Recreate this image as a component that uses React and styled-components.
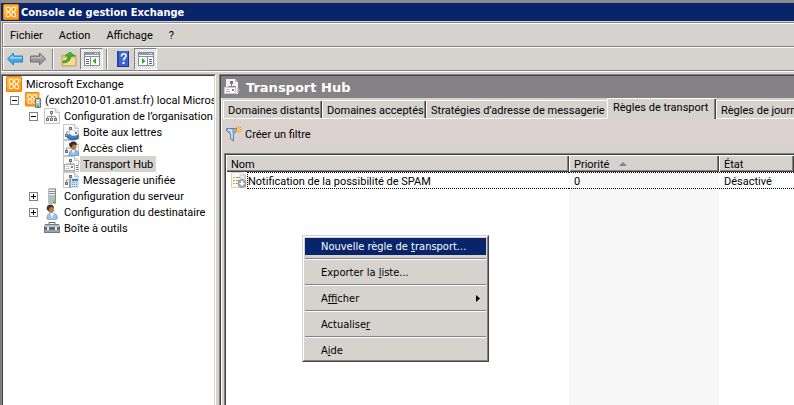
import React from 'react'
import styled, { createGlobalStyle, css } from 'styled-components'

const GlobalStyle = createGlobalStyle`
  * {
    box-sizing: border-box;
  }
  body {
    margin: 0;
    background: #848284;
    color: #000;
    font-family: Roboto, 'Liberation Sans', sans-serif;
    font-size: 11px;
  }
  button {
    padding: 0;
    border: 0;
    background: none;
    color: inherit;
    font: inherit;
    text-align: left;
    white-space: nowrap;
  }
`

/* ---------- icons ---------- */

// orange tile with the four petals of the Exchange logo
const ExchangeMark = () => (
  <>
    <rect x="0" y="0" width="16" height="16" rx="1.500" fill="#f57c00" />
    <rect x="1" y="1" width="14" height="14" rx="1" fill="#ff9a1f" />
    <path d="M1 1h14v5C10 6 5 8 1 11z" fill="#ffb545" />
    <g fill="#f9921c" stroke="#fff3cf" strokeWidth="1.200">
      <path d="M3.500 3.500h3l1 2-1 2h-2l-1-2z" />
      <path d="M12.500 3.500h-3l-1 2 1 2h2l1-2z" />
      <path d="M3.500 12.500h3l1-2-1-2h-2l-1 2z" />
      <path d="M12.500 12.500h-3l-1-2 1-2h2l1 2z" />
    </g>
  </>
)

// sheet of paper with a folded corner
const Sheet = () => (
  <>
    <path d="M.5.5h11l4 4v11H.5z" fill="#fbfbfb" stroke="#c6c6c8" />
    <path d="M11.500.5v4h4" fill="#e6e6e8" stroke="#c6c6c8" />
  </>
)

// sheet with the top of a chart, base of the third-level tree icons
const RoleSheet = () => (
  <>
    <Sheet />
    <path d="M7.500 6v2M3.500 10V8h8" fill="none" stroke="#98989c" />
    <rect x="6.500" y="3.500" width="2" height="2" fill="#bbb" stroke="#6d6d71" />
    <rect x="2.500" y="10.500" width="2" height="2" fill="#bbb" stroke="#6d6d71" />
  </>
)

const drawings = {
  exchange: <ExchangeMark />,
  server2010: (
    <>
      <g transform="scale(.9)">
        <ExchangeMark />
      </g>
      <path d="M10.500 6.500h5v9h-5z" fill="#b3bec3" stroke="#6b777d" />
      <path d="M11 8.500h3M11 10.500h3" stroke="#f2f5f6" />
      <rect x="12" y="13" width="2" height="2" fill="#43c41e" />
    </>
  ),
  org: (
    <>
      <Sheet />
      <path d="M7.500 6v4M3.500 10V8.500h8V10" fill="none" stroke="#98989c" />
      <rect x="6.500" y="3.500" width="2" height="2" fill="#ddd" stroke="#77777b" />
      <rect x="2.500" y="10.500" width="2" height="2" fill="#ddd" stroke="#77777b" />
      <rect x="6.500" y="10.500" width="2" height="2" fill="#ddd" stroke="#77777b" />
      <rect x="10.500" y="10.500" width="2" height="2" fill="#ddd" stroke="#77777b" />
    </>
  ),
  mailbox: (
    <>
      <RoleSheet />
      <path d="M6 6l9 1v5l-8-1z" fill="#fff" stroke="#b9b9c4" strokeWidth=".7" />
      <rect x="12" y="8" width="2" height="2" fill="#e0555c" />
      <path d="M4 11l3-1 2 2h3l4-2v4l-3 2H7l-3-2z" fill="#3c82c4" />
      <path d="M4 13l3 2h6l3-2" fill="none" stroke="#235f9c" />
    </>
  ),
  client: (
    <>
      <RoleSheet />
      <path d="M6 16c0-5 2-6 5-6s5 2 5 6z" fill="#8fbce8" stroke="#4a7fb8" strokeWidth=".7" />
      <path d="M9 10l1 4 2-4z" fill="#fff" />
      <ellipse cx="10.500" cy="6" rx="3" ry="4" fill="#b9784a" />
      <path d="M7 7c-2-7 7-7 7-2-3-1-5-1-5 2z" fill="#3b2a20" />
    </>
  ),
  hub: (
    <>
      <RoleSheet />
      <rect x="1.500" y="8.500" width="10" height="6" fill="#fff" stroke="#a8a8ae" />
      <path d="M3 10.500h3M3 12.500h4" stroke="#c4c4ca" />
      <rect x="8" y="10" width="2" height="2" fill="#e0555c" />
      <path d="M13 9.500h2M13 11.500h2M13 13.500h2" stroke="#5a7ca8" />
    </>
  ),
  hubTitle: (
    <>
      <path d="M2 0h9l3 3v12H2z" fill="#f1f1f3" />
      <path d="M11 0v3h3" fill="#b8b8bc" />
      <path d="M7.500 4v3M4 7.500h8" stroke="#8a8a8e" fill="none" />
      <rect x="6" y="2" width="3" height="3" fill="#77777b" />
      <rect x=".5" y="8.500" width="11" height="6" fill="#fff" stroke="#c8c8ce" />
      <path d="M2 10.500h3M2 12.500h4" stroke="#a9a9b2" />
      <rect x="8" y="10" width="2" height="2" fill="#e0555c" />
      <path d="M13 9.500h2M13 11.500h3M13 13.500h2" stroke="#9dc1e6" />
    </>
  ),
  unified: (
    <>
      <RoleSheet />
      <path d="M6 7h2v9H6z" fill="#9aa3aa" />
      <rect x="8" y="6" width="8" height="10" fill="#cfdfee" />
      <rect x="9" y="7" width="6" height="2" fill="#2f8bd8" />
      <path d="M9 10.500h6M9 12.500h6M9 14.500h6" stroke="#6d9cc8" strokeDasharray="1 1" />
    </>
  ),
  server: (
    <>
      <path d="M4 1l1-1h6l1 1v14l-1 1H5l-1-1z" fill="#b3bdc0" />
      <path d="M11 0l1 1v14l-1 1z" fill="#7f8b90" />
      <path d="M5 2.500h6M5 4.500h6M5 6.500h6" stroke="#f4f7f7" />
      <path d="M5 3.500h6M5 5.500h6" stroke="#7f8a8e" />
      <rect x="9" y="13" width="3" height="2" fill="#43d411" />
    </>
  ),
  recipient: (
    <>
      <path d="M3 15c0-4 1-6 5-6s6 3 5 6c-3 1-7 1-10 0z" fill="#9cc4ea" stroke="#5f8cc0" strokeWidth=".7" />
      <path d="M6 9l2 5 2-5z" fill="#eff6fd" />
      <ellipse cx="7" cy="5" rx="3" ry="4" fill="#b9784a" />
      <path d="M3 6C1-1 10-1 10 4 7 2 5 3 5 7z" fill="#4a3628" />
    </>
  ),
  toolbox: (
    <>
      <path d="M5 5V2.500h6V5" fill="none" stroke="#5b666d" />
      <path d="M1 4h14l1 3v6H0V7z" fill="#6f7c84" />
      <path d="M1 5h14v2H1z" fill="#b4bec4" />
      <path d="M1 10h14v2H1z" fill="#98a4ab" />
      <path d="M0 8.500h16" stroke="#4c585e" />
      <path d="M3 7h2v3H3zM11 7h2v3h-2z" fill="#eceff0" />
    </>
  ),
  back: (
    <>
      <path d="M.5 8L6.500 2v3h9v6h-9v3z" fill="#3fa9ea" stroke="#2a83bd" />
      <path d="M2 8l4-4v2h9v1.500H6z" fill="#9adafa" />
    </>
  ),
  forward: (
    <>
      <path d="M15.500 8l-6-6v3h-9v6h9v3z" fill="#969698" stroke="#717174" />
      <path d="M14 8l-4-4v2H1v1.500h9z" fill="#bcbcbe" />
    </>
  ),
  folderUp: (
    <>
      <path d="M1 4h5l1 1h7v-1h1v11H1z" fill="#e5bf63" stroke="#c99c45" strokeWidth=".8" />
      <path d="M2 7h12v7H2z" fill="#f7dd94" />
      <path d="M3 10c3 0 5-2 5-5H5l5-4 5 4h-4c0 4-3 7-8 7z" fill="#43b036" stroke="#248420" strokeWidth=".6" transform="translate(-1 0)" />
    </>
  ),
  treePane: (
    <>
      <rect x=".5" y="1.500" width="15" height="13" fill="#fff" stroke="#848e9c" />
      <rect x="1" y="2" width="14" height="2" fill="#8d99ad" />
      <path d="M11 2h1v1h-1zM13 2h1v1h-1z" fill="#fff" />
      <path d="M6.500 6v8M1 5.500h14" stroke="#848e9c" />
      <path d="M2 8.500h3M2 10.500h3M2 12.500h3" stroke="#4d6488" />
      <path d="M12 7v6L8.500 10z" fill="#2fa824" />
    </>
  ),
  help: (
    <>
      <rect x="2" y="0" width="12" height="16" fill="#3a66d2" />
      <path d="M2 0h2v16H2z" fill="#2249a8" />
      <path d="M13 0h1v16h-1zM2 15h12v1H2z" fill="#1a3788" />
      <path d="M6.500 5.500c0-3.500 4.500-3.500 4.500-1 0 2.500-2.500 2.500-2.500 5" fill="none" stroke="#fff" strokeWidth="1.600" />
      <rect x="7.500" y="11" width="2" height="2" fill="#fff" />
    </>
  ),
  actionPane: (
    <>
      <rect x=".5" y="1.500" width="15" height="13" fill="#fff" stroke="#848e9c" />
      <rect x="1" y="2" width="14" height="2" fill="#8d99ad" />
      <path d="M11 2h1v1h-1zM13 2h1v1h-1z" fill="#fff" />
      <path d="M9.500 6v8M1 5.500h14" stroke="#848e9c" />
      <path d="M11 8.500h3M11 10.500h3M11 12.500h3" stroke="#4d6488" />
      <path d="M4 7v6l3.500-3z" fill="#2fa824" />
    </>
  ),
  filter: (
    <>
      <path d="M.5 2.500h11v2L7.500 8v7l-3-2V8l-4-3.500z" fill="#8fabcb" stroke="#58769c" strokeWidth=".8" />
      <path d="M2 4h3l1 4v5" fill="none" stroke="#e3edf7" strokeWidth="1.300" />
      <path d="M12.500 0v7M9 3.500h7M10 1l5 5M15 1l-5 5" stroke="#f2a01e" />
      <circle cx="12.500" cy="3.500" r="1.500" fill="#ffd452" />
    </>
  ),
  rule: (
    <>
      <path d="M.5.5h10l4 3v12H.5z" fill="#fbf8ee" stroke="#d2cec2" />
      <path d="M5 5.500h5M5 8.500h3M5 11.500h2" stroke="#9a9a9a" />
      <path d="M2 5h2v1H2zM2 8h2v1H2zM2 11h2v1H2z" fill="#d8a23a" />
      <rect x="9" y="3" width="5" height="4" fill="#ececf0" stroke="#b4b4bc" strokeWidth=".6" />
      <circle cx="11" cy="11.500" r="4" fill="#a9a9ac" stroke="#8a8a8e" strokeWidth=".7" />
      <path d="M10 9h2v2h2l-3 3-3-3h2z" fill="#fff" />
    </>
  ),
}

const IconSvg = styled.svg`
  flex: none;
  width: 16px;
  height: 16px;
  display: block;
`

const Icon = ({ name }) => (
  <IconSvg viewBox="0 0 16 16" aria-hidden="true">
    {drawings[name]}
  </IconSvg>
)

/* ---------- window ---------- */

const Window = styled.div` // whole console window
  display: flex;
  flex-direction: column;
  height: 100vh;
  border-top: 3px solid #8c8a8c;
  border-left: 1px solid #7b797b;
  overflow: hidden;
`

const TitleBar = styled.header`
  display: flex;
  align-items: center;
  gap: 2px;
  height: 19px;
  padding-left: 2px;
  background: #08246b;
  border-bottom: 1px solid #d6d3ce;
  color: #fff;

  h1 {
    margin: 0;
    font: bold 11px 'DejaVu Sans Condensed', 'DejaVu Sans', sans-serif;
    white-space: nowrap;
  }
`

const Bar = styled.div` // menu bar and tool bar share the raised edge
  display: flex;
  align-items: center;
  flex: none;
  height: 24px;
  margin-left: 1px;
  border-left: 1px solid #848284;
  border-top: 1px solid ${(p) => (p.$first ? '#848284' : '#fff')};
  border-bottom: 1px solid #848284;
  background: #d6d3ce;
  box-shadow: inset 1px 0 #fff;
`

const MenuBar = styled(Bar).attrs({ as: 'nav' })`
  height: 25px;
  gap: 16px;
  padding: 2px 0 0 7px;
  box-shadow: inset 1px 1px #fff;
`

const Frame = styled.div`
  flex: none;
  background: #d6d3ce;
`

const ToolButton = styled.button`
  display: flex;
  align-items: center;
  justify-content: center;
  width: 23px;
  height: 22px;

  ${(p) =>
    p.$pressed &&
    css`
      border: 1px solid;
      border-color: #848284 #fff #fff #848284;
      background: repeating-conic-gradient(#fff 0 25%, #d6d3ce 0 50%) 0 0 / 2px 2px;
    `}
`

const Separator = styled.span`
  width: 2px;
  height: 20px;
  margin: 0 3px;
  border-left: 1px solid #848284;
  border-right: 1px solid #fff;
`

const Main = styled.main`
  display: flex;
  flex: 1;
  min-height: 0;
  border-top: 1px solid #fff;
  background: #d6d3ce;
`

/* ---------- tree ---------- */

const TreePane = styled.aside`
  flex: none;
  width: 215px;
  margin-top: 2px;
  border: solid #848284;
  border-width: 1px 1px 0 1px;
  border-right-color: #fff;
  overflow: hidden;
`

const TreeBody = styled.div`
  height: 100%;
  border: solid #424142;
  border-width: 1px 1px 0 1px;
  border-right-color: #d6d3ce;
  background: #fff;
  overflow: hidden;
`

const Tree = styled.ul`
  margin: 0;
  padding: 0;
  list-style: none;
`

const TreeRow = styled.li`
  display: flex;
  align-items: center;
  height: 16px;
  padding-left: ${(p) => p.$level * 19 - 16}px;
`

const LeafPad = styled.span`
  flex: none;
  width: 19px;
`

const Expander = styled.button`
  flex: none;
  width: 9px;
  height: 9px;
  margin: 0 6px 0 4px;
  border: 1px solid #848284;
  background:
    linear-gradient(#000, #000) center / 5px 1px no-repeat,
    linear-gradient(#000, #000) center / 1px ${(p) => (p.$open ? 0 : 5)}px no-repeat,
    #fff;
`

const TreeLabel = styled.button`
  height: 16px;
  margin-left: 1px;
  padding: 1px 3px 0;
  line-height: 15px;
  background: ${(p) => (p.$selected ? '#d6d3ce' : 'none')};
`

/* ---------- right pane ---------- */

const Splitter = styled.div`
  flex: none;
  width: 3px;
`

const WorkPane = styled.section`
  display: flex;
  flex: 1;
  flex-direction: column;
  min-width: 0;
  margin-top: 2px;
  border: solid #848284;
  border-width: 1px 0 0 1px;
`

const PaneTitle = styled.div`
  display: flex;
  align-items: center;
  flex: none;
  gap: 6px;
  height: 23px;
  padding-left: 3px;
  border-top: 1px solid #424142;
  border-left: 1px solid #424142;
  background: #848284;
  color: #fff;

  h2 {
    margin: 0;
    font: bold 13px 'DejaVu Sans', sans-serif;
  }
`

const PaneBody = styled.div`
  display: flex;
  flex: 1;
  flex-direction: column;
  min-height: 0;
  border-left: 1px solid #424142;
  box-shadow: inset 1px 0 #fff;
`

const Tabs = styled.div`
  display: flex;
  align-items: flex-end;
  flex: none;
  height: 21px;
  padding-left: 2px;
  overflow: hidden;
`

const Tab = styled.button`
  flex: none;
  width: ${(p) => p.$width}px;
  height: 19px;
  padding: 1px 0 0 4px;
  border: solid #fff;
  border-width: 1px 0 1px 1px;
  box-shadow: inset -1px 0 #424142, inset -2px 0 #848284;

  ${(p) =>
    p.$flat &&
    css`
      box-shadow: none;
    `}

  ${(p) =>
    p.$active &&
    css`
      height: 21px;
      padding: 0 0 3px 5px;
      border-bottom: 0;
      border-radius: 2px 0 0 0;
    `}
`

const FilterBar = styled.div`
  display: flex;
  align-items: center;
  flex: none;
  height: 28px;
  margin: 1px 0 5px 1px;
  padding-left: 4px;
  background: #dbd1ce;

  button {
    display: flex;
    align-items: center;
    gap: 3px;
  }
`

const ListView = styled.div`
  flex: 1;
  min-height: 0;
  display: grid;
  margin-left: 3px;
  border: solid #848284;
  border-width: 1px 0 0 1px;
  overflow: hidden;
`

const Table = styled.table`
  width: 100%;
  height: 100%;
  border-collapse: separate;
  border-spacing: 0;
  border: solid #424142;
  border-width: 1px 0 0 1px;
  background: #fff;
  table-layout: fixed;

  tr {
    height: 17px;
  }
  th,
  td {
    padding: 0 0 0 5px;
    text-align: left;
    font-weight: normal;
    white-space: nowrap;
  }
  th {
    height: 17px;
    padding-left: 4px;
    background: #d6d3ce;
    border: solid #fff;
    border-width: 1px 0 0 1px;
    box-shadow: inset -1px -1px #424142, inset -2px -2px #848284;
  }
  td:nth-child(2) {
    background-color: #f7f7f7;
  }
  tr:last-child {
    height: auto;
  }
`

const SortMark = styled.span`
  display: inline-block;
  margin-left: 10px;
  border: solid transparent;
  border-width: 0 4px 4px;
  border-bottom-color: #848284;
  vertical-align: 2px;
`

// one-pixel dots along the top and bottom of the focused line
const dots = css`
  background-image:
    repeating-linear-gradient(90deg, #000 0 1px, transparent 1px 2px),
    repeating-linear-gradient(90deg, #000 0 1px, transparent 1px 2px);
  background-size: 100% 1px;
  background-position: 0 0, 0 100%;
  background-repeat: no-repeat;
`

const FocusCell = styled.td`
  height: 17px;
  line-height: 15px;
  ${dots}

  && {
    padding-top: 2px;
  }
`

const NameCell = styled.td`
  height: 17px;

  div {
    display: flex;
  }
  button {
    flex: 1;
    height: 17px;
    padding-top: 2px;
    line-height: 15px;
    border-left: 1px dotted #000;
    ${dots}
  }
`

/* ---------- context menu ---------- */

const ContextMenu = styled.div` // floats over the list
  position: absolute;
  left: 302px;
  top: 235px;
  width: 187px;
  border: 1px solid;
  border-color: #d6d3ce #424142 #424142 #d6d3ce;
  background: #d6d3ce;
  font-family: 'DejaVu Sans Condensed', 'DejaVu Sans', sans-serif;
`

const MenuInner = styled.div`
  display: flex;
  flex-direction: column;
  padding: 1px;
  border: 1px solid;
  border-color: #fff #848284 #848284 #fff;

  hr {
    width: 100%;
    height: 2px;
    margin: 3px 0 4px;
    border: 0;
    border-top: 1px solid #848284;
    border-bottom: 1px solid #fff;
  }
`

const MenuItem = styled.button`
  display: flex;
  align-items: center;
  justify-content: space-between;
  height: 17px;
  padding: 0 5px 0 16px;
  background: ${(p) => (p.$active ? '#08246b' : 'none')};
  color: ${(p) => (p.$active ? '#fff' : '#000')};

  svg {
    width: 5px;
    height: 7px;
  }
`

const treeItems = [
  { level: 0, icon: 'exchange', label: 'Microsoft Exchange' },
  { level: 1, icon: 'server2010', label: '(exch2010-01.amst.fr) local Microsoft', open: true },
  { level: 2, icon: 'org', label: 'Configuration de l’organisation', open: true },
  { level: 3, icon: 'mailbox', label: 'Boîte aux lettres' },
  { level: 3, icon: 'client', label: 'Accès client' },
  { level: 3, icon: 'hub', label: 'Transport Hub', selected: true },
  { level: 3, icon: 'unified', label: 'Messagerie unifiée' },
  { level: 2, icon: 'server', label: 'Configuration du serveur', open: false },
  { level: 2, icon: 'recipient', label: 'Configuration du destinataire', open: false },
  { level: 2, icon: 'toolbox', label: 'Boîte à outils' },
]

const tabs = [
  { label: 'Domaines distants', width: 99 },
  { label: 'Domaines acceptés', width: 104 },
  { label: 'Stratégies d’adresse de messagerie', width: 181, flat: true },
  { label: 'Règles de transport', width: 109, active: true },
  { label: 'Règles de journal', width: 100 },
]

export default function App() {
  return (
    <Window>
      <GlobalStyle />
      <TitleBar>
        <Icon name="exchange" />
        <h1>Console de gestion Exchange</h1>
      </TitleBar>

      <Frame>
        <MenuBar $first>
          <button>Fichier</button>
          <button>Action</button>
          <button>Affichage</button>
          <button>?</button>
        </MenuBar>
        <Bar>
          <ToolButton aria-label="Précédent"><Icon name="back" /></ToolButton>
          <ToolButton aria-label="Suivant"><Icon name="forward" /></ToolButton>
          <Separator />
          <ToolButton aria-label="Dossier parent"><Icon name="folderUp" /></ToolButton>
          <ToolButton aria-label="Arborescence" $pressed><Icon name="treePane" /></ToolButton>
          <Separator />
          <ToolButton aria-label="Aide"><Icon name="help" /></ToolButton>
          <ToolButton aria-label="Volet Actions" $pressed><Icon name="actionPane" /></ToolButton>
        </Bar>
      </Frame>

      <Main>
        <TreePane>
          <TreeBody>
            <Tree>
              {treeItems.map((item) => (
                <TreeRow key={item.label} $level={item.level || 1}>
                  {item.open !== undefined && <Expander $open={item.open} aria-label={item.label} />}
                  {item.open === undefined && item.level > 0 && <LeafPad />}
                  <Icon name={item.icon} />
                  <TreeLabel $selected={item.selected}>{item.label}</TreeLabel>
                </TreeRow>
              ))}
            </Tree>
          </TreeBody>
        </TreePane>
        <Splitter />

        <WorkPane>
          <PaneTitle>
            <Icon name="hubTitle" />
            <h2>Transport Hub</h2>
          </PaneTitle>
          <PaneBody>
            <Tabs role="tablist">
              {tabs.map((tab) => (
                <Tab key={tab.label} role="tab" $width={tab.width} $active={tab.active} $flat={tab.flat}>
                  {tab.label}
                </Tab>
              ))}
            </Tabs>
            <FilterBar>
              <button>
                <Icon name="filter" />
                Créer un filtre
              </button>
            </FilterBar>
            <ListView>
              <Table>
                <colgroup>
                  <col />
                  <col width="150" />
                  <col width="75" />
                </colgroup>
                <thead>
                  <tr>
                    <th>Nom</th>
                    <th>
                      Priorité
                      <SortMark />
                    </th>
                    <th>État</th>
                  </tr>
                </thead>
                <tbody>
                  <tr>
                    <NameCell>
                      <div>
                        <Icon name="rule" />
                        <button>Notification de la possibilité de SPAM</button>
                      </div>
                    </NameCell>
                    <FocusCell>0</FocusCell>
                    <FocusCell>Désactivé</FocusCell>
                  </tr>
                  <tr>
                    <td />
                    <td />
                    <td />
                  </tr>
                </tbody>
              </Table>
            </ListView>
          </PaneBody>
        </WorkPane>
      </Main>

      <ContextMenu role="menu">
        <MenuInner>
          <MenuItem role="menuitem" $active>
            <span>Nouvelle règle de <u>t</u>ransport...</span>
          </MenuItem>
          <hr />
          <MenuItem role="menuitem">
            <span>Exporter la <u>l</u>iste...</span>
          </MenuItem>
          <hr />
          <MenuItem role="menuitem">
            <span>A<u>f</u>ficher</span>
            <svg viewBox="0 0 5 7" aria-hidden="true">
              <path d="M0 0v7l4-3.500z" />
            </svg>
          </MenuItem>
          <hr />
          <MenuItem role="menuitem">
            <span>Actualise<u>r</u></span>
          </MenuItem>
          <hr />
          <MenuItem role="menuitem">
            <span>A<u>i</u>de</span>
          </MenuItem>
        </MenuInner>
      </ContextMenu>
    </Window>
  )
}
